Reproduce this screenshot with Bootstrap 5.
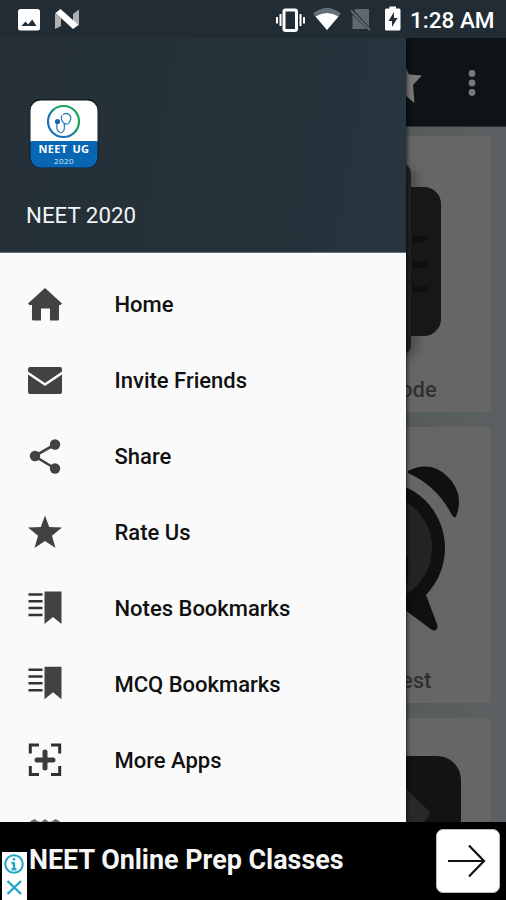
<!DOCTYPE html>
<html lang="en">
<head>
<meta charset="utf-8">
<meta name="viewport" content="width=device-width, initial-scale=1">
<title>NEET 2020</title>
<link href="https://cdn.jsdelivr.net/npm/bootstrap@5.3.0/dist/css/bootstrap.min.css" rel="stylesheet">
<style>
body{font-family:Roboto,"Noto Sans",sans-serif;background:#000}
svg{display:block;flex:none}
.phone{width:506px;height:900px;background:#000}
.status-strip{height:38px;background:#222c35;color:#fff;padding:0 12px 0 17px}
.clock{font-size:22.500px;font-weight:500;line-height:38px;width:84px;white-space:nowrap;margin-left:9px;padding-top:2px}
.stage{height:784px}
.drawer{width:406px;background:#fafafa;z-index:2;box-shadow:0 0 5px #000}
.drawer-head{height:215px;background:linear-gradient(100deg,#242f37,#26323a 65%,#27353e);padding:60px 0 0 26px;border-bottom:1px solid #66707a}
.account{font-size:22.300px;line-height:28px;color:#f3f4f5;margin-top:31px}
.menu{padding-top:14px}
.menu .nav-link{height:75.9px;padding:0 0 0 26px;color:#111;font-size:22px;font-weight:500}
.menu .nav-link svg{margin-right:50.5px}
.menu .nav-link span{line-height:30px;padding-top:1px}
.behind{width:100px;background:linear-gradient(90deg,#565b5c,#5b6061 80%,#5c5f62)}
.appbar{height:89px;background:#0e1317;border-bottom:1px solid #333}
.tiles{padding:9px 15px 0 0;gap:15px}
.tile{height:276px;background:#666;border-radius:0 4px 4px 0}
.tile-name{font-size:22px;font-weight:500;line-height:32px;color:#303030;padding-top:1px}
.shift-a{margin-left:-6px}
.shift-b{margin-left:-5px}
.ad{height:78px;padding:0 6px 0 2px}
.adchoice{width:25px;height:48px;background:#fff}
.ad-title{font-size:26.900px;font-weight:700;line-height:34px;padding:21px 0 0 2px;color:#f6f6f6}
.go{width:64px;height:64px;border-radius:7px;background:#fff;margin-top:7px;border:1px solid #bbb}
</style>
<script src="https://cdn.jsdelivr.net/npm/bootstrap@5.3.0/dist/js/bootstrap.bundle.min.js"></script>
</head>
<body>
<div class="phone d-flex flex-column overflow-hidden">
  <header class="status-strip d-flex align-items-center">
    <svg width="70" height="38" viewBox="17 0 70 38">
      <rect x="18" y="9" width="22" height="21.500" rx="2.500" fill="#fff"/>
      <path d="M21.500 26l4-4.500 2.700 3 4-5 4.300 6.500z" fill="#222c35"/>
      <path d="M55 13l6 5v8l-6 3zM73 14l6-4.500v16L73 22z" fill="#aeb0b2"/>
      <path d="M55.500 13l5-4 18 16-5.500 4z" fill="#fff"/>
    </svg>
    <svg class="ms-auto" width="128" height="38" viewBox="272 0 128 38">
      <rect x="283" y="10" width="12.500" height="20.500" rx="1.500" fill="none" stroke="#fff" stroke-width="3"/>
      <path d="M279.500 14v12M276 17v6.500M299.500 14v12M303 17v6.500" stroke="#fff" stroke-width="2"/>
      <path d="M312 13.500q14-11 28 0L326 30z" fill="#65707a"/>
      <path d="M314.500 16.500q11.500-7 23 0L326 30z" fill="#fff"/>
      <path d="M354 9h14v17.500L353.500 11zM351.500 14.500L366 29h-14.500z" fill="#60676e"/>
      <path d="M350 10.500L369 30" stroke="#60676e" stroke-width="2"/>
      <path d="M385.500 8.500h3V6.500h6.500v2h3q1.500 0 1.500 1.500v19q0 1.500-1.500 1.500h-12.500q-1.500 0-1.500-1.500V10q0-1.500 1.500-1.500z" fill="#fff"/>
      <path d="M393 12l-5.500 9h3.500v6l5.500-9H393z" fill="#222c35"/>
    </svg>
    <div class="clock">1:28 AM</div>
  </header>

  <main class="stage d-flex overflow-hidden">
    <aside class="drawer flex-shrink-0 overflow-hidden">
      <div class="drawer-head">
        <svg width="76" height="72" viewBox="26 98 76 72">
          <defs>
            <clipPath id="tileClip"><rect x="30.500" y="100.500" width="67" height="67" rx="10"/></clipPath>
            <linearGradient id="ring" x1="0" y1="1" x2="1" y2="0"><stop offset=".35" stop-color="#1b70b7"/><stop offset=".65" stop-color="#1aa35a"/></linearGradient>
          </defs>
          <rect x="29.500" y="99" width="69" height="69" rx="11" fill="#121a21"/>
          <g clip-path="url(#tileClip)"><path fill="#fff" d="M30 100h68v42H30z"/><path fill="#0767b5" d="M30 141h68v27H30z"/></g>
          <circle cx="63.500" cy="121.500" r="15.500" fill="none" stroke="url(#ring)" stroke-width="2.200"/>
          <path d="M62 115q-2 5 2 8t6-2q2-4-1-6.500q-3-2-6 0M57 122q-1 8 2 10t5-2q1-3 0-7" fill="none" stroke="#3680bd" stroke-width="1.300"/>
          <circle cx="57.500" cy="121.500" r="2.600" fill="#1266b2"/>
          <text x="38.500" y="153" font-family="Open Sans" font-size="11" font-weight="700" fill="#fff" textLength="50.500" word-spacing="2">NEET UG</text>
          <text x="54" y="164" font-family="Open Sans" font-size="8" fill="#d6e6f5" textLength="19.500">2020</text>
        </svg>
        <div class="account">NEET 2020</div>
      </div>
      <nav class="menu nav flex-column flex-nowrap">
        <a class="nav-link d-flex align-items-center" href="#"><svg width="38" height="38" viewBox="0 0 38 38" fill="#424242"><path d="M19 2L36 17.500l-1.500 1.500H33v14q0 1.500-1.500 1.500H24V22.500h-9v12H7.500Q6 34.500 6 33V19H3.500L2 17.500z"/></svg><span>Home</span></a>
        <a class="nav-link d-flex align-items-center" href="#"><svg width="38" height="38" viewBox="0 0 38 38" fill="#424242"><path d="M4 5h30q2 0 2 2v2.500L19 21 2 9.500V7q0-2 2-2zM2 12.500L19 24l17-11.500V30q0 2-2 2H4q-2 0-2-2z"/></svg><span>Invite Friends</span></a>
        <a class="nav-link d-flex align-items-center" href="#"><svg width="38" height="38" viewBox="0 0 38 38" fill="#424242"><path d="M29 6.500L8.500 18 29 30.500" fill="none" stroke="#424242" stroke-width="2.600"/><circle cx="29" cy="6.500" r="5.200"/><circle cx="9" cy="18" r="5.200"/><circle cx="29" cy="30.500" r="5.200"/></svg><span>Share</span></a>
        <a class="nav-link d-flex align-items-center" href="#"><svg width="38" height="38" viewBox="0 0 38 38" fill="#424242"><path d="M19 1.500l4.200 11.500L36 13.500l-10 8.200L29.500 34 19 27 8.500 34 12 21.700 2 13.500l12.800-.5z"/></svg><span>Rate Us</span></a>
        <a class="nav-link d-flex align-items-center" href="#"><svg width="38" height="38" viewBox="0 0 38 38" fill="#424242"><path d="M2.500 4.500h14M2.500 11.200h14M2.500 18h14M2.500 25h14" stroke="#333" stroke-width="2.500"/><path d="M18.500 1.500h17V34L27 27l-8.500 7z"/></svg><span>Notes Bookmarks</span></a>
        <a class="nav-link d-flex align-items-center" href="#"><svg width="38" height="38" viewBox="0 0 38 38" fill="#424242"><path d="M2.500 4.800h14M2.500 11.500h14M2.500 18.300h14M2.500 25.300h14" stroke="#333" stroke-width="2.500"/><path d="M18.500 1.800h17V34.300L27 27.300l-8.500 7z"/></svg><span>MCQ Bookmarks</span></a>
        <a class="nav-link d-flex align-items-center" href="#"><svg width="38" height="38" viewBox="0 0 38 38" fill="none"><path d="M13 4H4.300V12.500M25 4h8.700V12.500M13 33.500H4.300V25M25 33.500h8.700V25" stroke="#303030" stroke-width="3"/><path d="M19 11v16M11 19h16" stroke="#3b3b3b" stroke-width="5" stroke-linecap="round"/></svg><span>More Apps</span></a>
        <a class="nav-link d-flex align-items-center" href="#" aria-label="More"><svg width="38" height="38" viewBox="0 0 38 38"><path d="M4.500 4l4-2 3 2 3.500 1 4-3 4 3 3.500-1 3-2 4 2v26h-29z" fill="#707070"/></svg></a>
      </nav>
    </aside>

    <section class="behind flex-shrink-0">
      <div class="appbar">
        <svg width="100" height="88" viewBox="406 38 100 88" fill="#777"><path d="M406 68l3 6.500 13 1-9 9.500 1.500 18-8.500-7z"/><circle cx="472" cy="73.500" r="3.400"/><circle cx="472" cy="83" r="3.400"/><circle cx="472" cy="92.500" r="3.400"/></svg>
      </div>
      <div class="tiles d-flex flex-column">
        <div class="tile flex-shrink-0">
          <svg width="85" height="237" viewBox="406 136 85 237">
            <defs><filter id="soft" x="-50%" y="-20%" width="200%" height="140%"><feGaussianBlur stdDeviation="5"/></filter></defs>
            <rect x="394" y="168" width="24" height="190" rx="12" fill="#3c3c3c" opacity=".6" filter="url(#soft)"/>
            <rect x="380" y="187" width="61" height="149" rx="17" fill="#171717"/>
            <path d="M413 236h15q-2 7-10 7h-5zM413 261h15v7h-15zM413 286h15v6h-15z" fill="#101010"/>
            <path d="M406 165q5 2 5 10v170q0 6-5 8z" fill="#222"/>
          </svg>
          <div class="tile-name shift-a">ode</div>
        </div>
        <div class="tile flex-shrink-0">
          <svg width="85" height="237" viewBox="406 428 85 237">
            <circle cx="378" cy="549" r="67" fill="#101010"/>
            <circle cx="378" cy="549" r="54" fill="#242424"/>
            <path d="M408 472q22-11 39 5 18 17 9 41-2 1-4-2-15-29-44-42zM401 608l25-12 11 29q2 8-5 6z" fill="#101010"/>
            <path d="M406 552q4 12 1 34h-1z" fill="#0c0c0c"/>
          </svg>
          <div class="tile-name shift-b">est</div>
        </div>
        <div class="tile flex-shrink-0">
          <svg width="85" height="236" viewBox="406 718 85 236"><rect x="330" y="756" width="131" height="131" rx="24" fill="#131313"/><path d="M406 789l21 20q5 5 0 10l-21 20z" fill="#292929"/></svg>
        </div>
      </div>
    </section>
  </main>

  <footer class="ad d-flex bg-black flex-shrink-0">
    <div class="adchoice align-self-end">
      <svg width="25" height="48" viewBox="0 0 25 48" fill="none" stroke="#20a5c5"><circle cx="12" cy="12" r="8.800" stroke-width="2"/><path d="M12 10.500v7M9.500 11H12M9.500 17.300h5M12 6v2.500" stroke-width="2.400"/><path d="M5.500 29l13.500 13M19 29l-13.500 13" stroke-width="2.400"/></svg>
    </div>
    <div class="ad-title">NEET Online Prep Classes</div>
    <a class="go ms-auto d-flex" href="#" aria-label="Open"><svg width="62" height="62" viewBox="0 0 62 62" fill="none" stroke="#111" stroke-width="2.200"><path d="M11 31h36M32 15.500L47 31 32 46.500"/></svg></a>
  </footer>
</div>
</body>
</html>
